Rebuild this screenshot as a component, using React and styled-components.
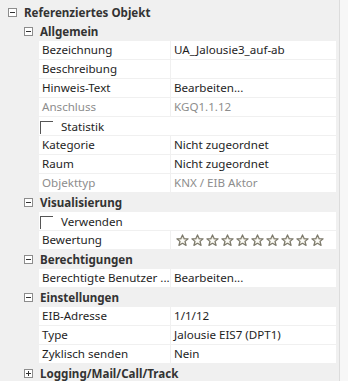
import React from "react";
import styled, { createGlobalStyle } from "styled-components";

const Global = createGlobalStyle`
  html, body { margin: 0; padding: 0; background: #f7f7f7; }
  body { font-family: "Noto Sans", "Open Sans", sans-serif; }
`;

const Frame = styled.div`
  display: flex;
  width: 348px;
  height: 381px;
  overflow: hidden;
`;

const Panel = styled.div`
  width: 340px;
  background: #f0f0f0;
  border-right: 1px solid #dcdcdc;
  display: flex;
  flex-direction: column;
  gap: 1px;
  padding-top: 3px;
  box-sizing: border-box;
  font-size: 11.6px;
  color: #1e1e1e;
`;

const HeaderRow = styled.div`
  display: flex;
  align-items: center;
  height: 18px;
  flex-shrink: 0;
  padding-left: ${(p) => (p.$level === 0 ? 8 : 24)}px;
  font-weight: 700;
  color: #333;
`;

const Toggle = styled.span`
  width: 9px;
  height: 9px;
  box-sizing: border-box;
  border: 1px solid #8c8c8c;
  background: #fff;
  position: relative;
  margin-right: 7px;
  flex-shrink: 0;
  &::before {
    content: "";
    position: absolute;
    left: 1px;
    right: 1px;
    top: 3px;
    height: 1px;
    background: #333;
  }
  &::after {
    content: "";
    display: ${(p) => (p.$open ? "none" : "block")};
    position: absolute;
    top: 1px;
    bottom: 1px;
    left: 3px;
    width: 1px;
    background: #333;
  }
`;

const PropRow = styled.div`
  display: flex;
  height: 18px;
  flex-shrink: 0;
  margin-left: 39px;
  width: 297px;
  background: #fff;
  color: ${(p) => (p.$disabled ? "#8d8d8d" : "#1e1e1e")};
`;

const Label = styled.div`
  width: 131px;
  box-sizing: border-box;
  padding-left: 3px;
  line-height: 18px;
  white-space: nowrap;
  overflow: hidden;
`;

const Value = styled.div`
  flex: 1;
  border-left: 1px solid #f0f0f0;
  padding-left: 3px;
  line-height: 18px;
  white-space: nowrap;
  display: flex;
  align-items: center;
`;

const CheckRow = styled.div`
  display: flex;
  align-items: center;
  height: 18px;
  flex-shrink: 0;
  margin-left: 39px;
  width: 297px;
  background: #fff;
`;

const CheckBox = styled.span`
  width: 13px;
  height: 13px;
  box-sizing: border-box;
  border-top: 1px solid #555;
  border-left: 1px solid #555;
  margin: 4px 8px 0 1px;
  align-self: flex-start;
`;

const Stars = styled.div`
  display: flex;
  gap: 2px;
  margin-left: 2px;
`;

const Star = () => (
  <svg width="13" height="13" viewBox="0 0 12 12">
    <path
      d="M6 0.8 L7.5 4.2 L11.2 4.4 L8.4 6.8 L9.3 10.6 L6 8.6 L2.7 10.6 L3.6 6.8 L0.8 4.4 L4.5 4.2 Z"
      fill="#dcd9cc"
      stroke="#7d7a6c"
      strokeWidth="1.1"
      strokeLinejoin="round"
    />
    <path d="M6 3.6 L6.8 5.4 L8.6 5.5 L7.2 6.7 L7.7 8.5 L6 7.5 L4.3 8.5 L4.8 6.7 L3.4 5.5 L5.2 5.4 Z" fill="#fbfbf8" />
  </svg>
);

const Header = ({ level, open = true, children }) => (
  <HeaderRow $level={level}>
    <Toggle $open={open} />
    {children}
  </HeaderRow>
);

const Prop = ({ label, value, disabled }) => (
  <PropRow $disabled={disabled}>
    <Label>{label}</Label>
    <Value>{value}</Value>
  </PropRow>
);

const Check = ({ label }) => (
  <CheckRow>
    <CheckBox />
    {label}
  </CheckRow>
);

export default function App() {
  return (
    <>
      <Global />
      <Frame>
        <Panel>
          <Header level={0}>Referenziertes Objekt</Header>
          <Header level={1}>Allgemein</Header>
          <Prop label="Bezeichnung" value="UA_Jalousie3_auf-ab" />
          <Prop label="Beschreibung" value="" />
          <Prop label="Hinweis-Text" value="Bearbeiten..." />
          <Prop label="Anschluss" value="KGQ1.1.12" disabled />
          <Check label="Statistik" />
          <Prop label="Kategorie" value="Nicht zugeordnet" />
          <Prop label="Raum" value="Nicht zugeordnet" />
          <Prop label="Objekttyp" value="KNX / EIB Aktor" disabled />
          <Header level={1}>Visualisierung</Header>
          <Check label="Verwenden" />
          <Prop
            label="Bewertung"
            value={
              <Stars>
                {Array.from({ length: 10 }).map((_, i) => (
                  <Star key={i} />
                ))}
              </Stars>
            }
          />
          <Header level={1}>Berechtigungen</Header>
          <Prop label="Berechtigte Benutzer ..." value="Bearbeiten..." />
          <Header level={1}>Einstellungen</Header>
          <Prop label="EIB-Adresse" value="1/1/12" />
          <Prop label="Type" value="Jalousie EIS7 (DPT1)" />
          <Prop label="Zyklisch senden" value="Nein" />
          <Header level={1} open={false}>Logging/Mail/Call/Track</Header>
        </Panel>
      </Frame>
    </>
  );
}
